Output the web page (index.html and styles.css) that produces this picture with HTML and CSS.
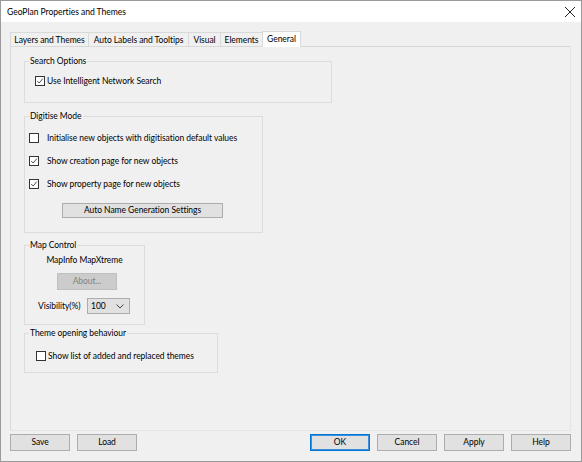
FILE: index.html
```html
<!DOCTYPE html>
<html>
<head>
<meta charset="utf-8">
<link rel="stylesheet" href="styles.css">
</head>
<body>
<div class="window">
  <div class="titlebar">
    <span class="title">GeoPlan Properties and Themes</span>
    <svg class="close" width="12" height="12" viewBox="0 0 12 12"><path d="M1 1L11 11M11 1L1 11" stroke="#222" stroke-width="1"/></svg>
  </div>
  <div class="client">
    <div class="tabs">
      <div class="tab t1">Layers and Themes</div>
      <div class="tab t2">Auto Labels and Tooltips</div>
      <div class="tab t3">Visual</div>
      <div class="tab t4">Elements</div>
      <div class="tab t5 selected">General</div>
    </div>
    <div class="panel">
      <fieldset class="group g-search">
        <legend>Search Options</legend>
        <div class="gbody">
          <label class="check c-search"><span class="box checked"><svg viewBox="0 0 10 10"><path d="M1.5 5L4 7.5L8.5 2" fill="none" stroke="#222" stroke-width="1"/></svg></span><span>Use Intelligent Network Search</span></label>
        </div>
      </fieldset>
      <fieldset class="group g-digit">
        <legend>Digitise Mode</legend>
        <div class="gbody">
          <label class="check c-digit"><span class="box"></span><span>Initialise new objects with digitisation default values</span></label>
          <label class="check c-digit"><span class="box checked"><svg viewBox="0 0 10 10"><path d="M1.5 5L4 7.5L8.5 2" fill="none" stroke="#222" stroke-width="1"/></svg></span><span>Show creation page for new objects</span></label>
          <label class="check c-digit"><span class="box checked"><svg viewBox="0 0 10 10"><path d="M1.5 5L4 7.5L8.5 2" fill="none" stroke="#222" stroke-width="1"/></svg></span><span>Show property page for new objects</span></label>
          <div class="btn btn-auto">Auto Name Generation Settings</div>
        </div>
      </fieldset>
      <fieldset class="group g-map">
        <legend>Map Control</legend>
        <div class="gbody">
          <div class="mapname">MapInfo MapXtreme</div>
          <div class="btn btn-about disabled">About...</div>
          <div class="visrow">
            <span>Visibility(%)</span>
            <div class="select"><span>100</span><svg width="8" height="5" viewBox="0 0 8 5"><path d="M0.5 0.5L4 4L7.5 0.5" fill="none" stroke="#444" stroke-width="1"/></svg></div>
          </div>
        </div>
      </fieldset>
      <fieldset class="group g-theme">
        <legend>Theme opening behaviour</legend>
        <div class="gbody">
          <label class="check c-theme"><span class="box"></span><span>Show list of added and replaced themes</span></label>
        </div>
      </fieldset>
    </div>
    <div class="buttons">
      <div class="btn">Save</div>
      <div class="btn">Load</div>
      <div class="spacer"></div>
      <div class="btn default">OK</div>
      <div class="btn">Cancel</div>
      <div class="btn">Apply</div>
      <div class="btn">Help</div>
    </div>
  </div>
</div>
</body>
</html>
```

FILE: styles.css
```css
* { box-sizing: border-box; }
html, body { margin: 0; padding: 0; background: #f0f0f0; }
body {
  font-family: Lato, "Liberation Sans", sans-serif;
  font-size: 8.5px;
  letter-spacing: -0.05px;
  color: #000;
}
.window {
  width: 582px;
  height: 462px;
  border: 1px solid #9a9a9a;
  background: #f0f0f0;
  display: flex;
  flex-direction: column;
}
.titlebar {
  height: 21px;
  background: #fff;
  display: flex;
  align-items: center;
  padding: 0 5px 0 6px;
  flex: none;
}
.title { flex: 1; font-size: 8.6px; }
.close { display: block; }
.client {
  flex: 1;
  display: flex;
  flex-direction: column;
  padding: 9px 10px 10px 9px;
}
.tabs {
  display: flex;
  align-items: flex-end;
  height: 15px;
  flex: none;
}
.tab {
  height: 14px;
  line-height: 14px;
  border: 1px solid #d9d9d9;
  border-bottom: none;
  border-right: none;
  padding: 0;
  text-align: center;
  white-space: nowrap;
  background: #f0f0f0;
}
.t1 { width: 78px; }
.t2 { width: 100px; }
.t3 { width: 32px; }
.t4 { width: 42px; }
.tab.selected {
  width: 39px;
  height: 16px;
  margin-bottom: -1px;
  background: #fff;
  position: relative;
  z-index: 1;
  border-right: 1px solid #d9d9d9;
  line-height: 14px;
}
.panel {
  height: 385px;
  width: 561px;
  border: 1px solid #d9d9d9;
  border-right-color: #e4e4e4;
  border-bottom-color: #e4e4e4;
  padding: 8px 0 0 13px;
  display: flex;
  flex-direction: column;
  align-items: flex-start;
  flex: none;
}
.group {
  margin: 0;
  border: 1px solid #dcdcdc;
  padding: 0;
  min-width: 0;
}
.group legend {
  padding: 0 1px;
  margin-left: 4px;
  line-height: 12px;
  height: 12px;
}
.g-search { width: 308px; height: 48px; }
.g-search .gbody { padding: 7px 0 0 10px; }
.g-digit { width: 239px; height: 123px; margin-top: 7px; }
.g-digit .gbody { padding: 9px 0 0 4px; }
.g-map { width: 121px; height: 86px; margin-top: 6px; }
.g-map .gbody { padding: 3px 0 0 0; }
.g-theme { width: 194px; height: 46px; margin-top: 2px; }
.g-theme .gbody { padding: 10px 0 0 11px; }

.check {
  display: flex;
  align-items: center;
  height: 14px;
}
.box {
  width: 10px;
  height: 10px;
  border: 1px solid #333;
  background: #fff;
  flex: none;
  display: flex;
  align-items: center;
  justify-content: center;
}
.box svg { width: 8px; height: 8px; display: block; }
.c-search .box { margin-right: 2px; }
.c-digit .box { margin-right: 8px; }
.c-digit + .c-digit { margin-top: 9px; }
.c-theme .box { margin-right: 2px; }

.btn {
  width: 60px;
  height: 17px;
  line-height: 15px;
  text-align: center;
  background: #e1e1e1;
  border: 1px solid #adadad;
  flex: none;
}
.btn-auto {
  width: 161px;
  height: 15px;
  line-height: 13px;
  margin: 12px 0 0 33px;
}
.btn.disabled {
  background: #cccccc;
  border-color: #bfbfbf;
  color: #838383;
}
.mapname { text-align: center; height: 13px; line-height: 13px; }
.btn-about { margin: 6px 0 0 32px; }
.visrow {
  display: flex;
  align-items: center;
  margin-top: 8px;
  padding-left: 13px;
}
.visrow > span { width: 49px; }
.select {
  width: 43px;
  height: 16px;
  background: #e1e1e1;
  border: 1px solid #adadad;
  display: flex;
  align-items: center;
  justify-content: space-between;
  padding: 0 5px 0 3px;
}
.select svg { display: block; }

.buttons {
  display: flex;
  gap: 6px;
  margin-top: 3px;
  flex: none;
}
.buttons .btn + .btn { margin-left: 1px; }
.spacer { flex: 1; }
.btn.default {
  border-color: #0078d7;
  box-shadow: inset 0 0 0 1px #3c8fdb;
}
```
